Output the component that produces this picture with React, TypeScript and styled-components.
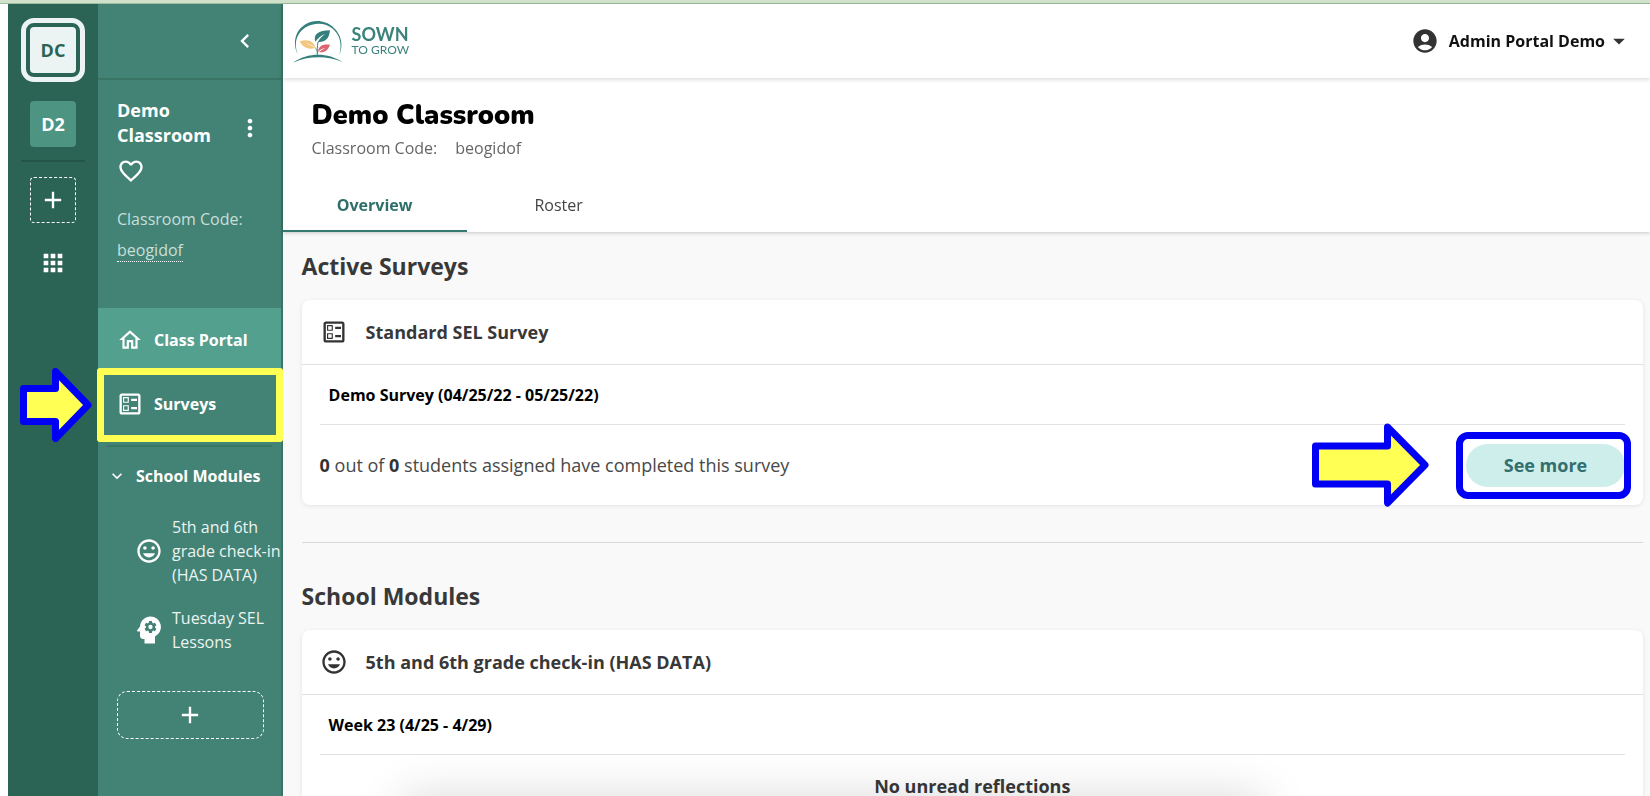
import React from "react";
import styled, { createGlobalStyle } from "styled-components";
import {
  MdAccountCircle,
  MdAdd,
  MdApps,
  MdArrowDropDown,
  MdChevronLeft,
  MdExpandMore,
  MdFavoriteBorder,
  MdMood,
  MdMoreVert,
  MdOutlineBallot,
  MdOutlineHome,
  MdPsychology,
} from "react-icons/md";

const GlobalStyle = createGlobalStyle`
  *, *::before, *::after { box-sizing: border-box; }
  body {
    margin: 0;
    background: #fff;
    color: #333;
    font-family: "Open Sans", "Noto Sans", sans-serif;
    font-size: 16px;
    line-height: 24px;
  }
  button { font: inherit; color: inherit; background: none; border: 0; padding: 0; cursor: pointer; }
  a { color: inherit; text-decoration: none; }
  h1, h2, h3, h4, p, ul { margin: 0; padding: 0; }
  ul { list-style: none; }
  svg { display: block; flex-shrink: 0; }
`;

const Page = styled.div`
  display: flex;
  height: 100vh;
  overflow: hidden;
  padding: 1px 0 0 8px;
  border-top: 3px solid #d0e2cc;
  background: linear-gradient(#a0bd9e 1px, #fff 1px);
  position: relative;
`;

const Rail = styled.nav`
  display: flex;
  flex-direction: column;
  align-items: center;
  flex: 0 0 90px;
  padding-top: 14px;
  background: #2b6354;
  color: #fff;
`;

const RailTile = styled.button<{ $active?: boolean }>`
  width: 46px;
  height: 46px;
  border-radius: 4px;
  font-size: 18px;
  font-weight: 700;
  background: ${(p) => (p.$active ? "#ebf4f2" : "#4d9482")};
  color: ${(p) => (p.$active ? "#2b6354" : "#fff")};
`;

const ActiveRing = styled.div`
  padding: 4px;
  margin-bottom: 19px;
  border: 5px solid #ebf4f2;
  border-radius: 13px;
`;

const RailDivider = styled.hr`
  width: 64px;
  height: 2px;
  margin: 13px 0 15px;
  border: 0;
  background: #245548;
`;

const DashedButton = styled.button<{ $wide?: boolean }>`
  display: flex;
  align-items: center;
  justify-content: center;
  width: ${(p) => (p.$wide ? "auto" : "46px")};
  height: ${(p) => (p.$wide ? "48px" : "46px")};
  margin: ${(p) => (p.$wide ? "18px 17px 0 19px" : "0")};
  border: 1px dashed #fff;
  border-radius: ${(p) => (p.$wide ? "10px" : "4px")};
`;

const AppsButton = styled.button`
  margin-top: 26px;
`;

const Sidebar = styled.aside`
  display: flex;
  flex-direction: column;
  flex: 0 0 184px;
  background: #438375;
  border-right: 2px solid #397565;
  color: #fff;
`;

const SidebarTop = styled.div`
  display: flex;
  align-items: center;
  justify-content: flex-end;
  height: 76px;
  padding-right: 22px;
  border-bottom: 2px solid #3a7465;
`;

const ClassInfo = styled.div`
  padding: 18px 17px 0 19px;
  height: 228px;
`;

const ClassHeading = styled.div`
  display: flex;
  align-items: center;
  justify-content: space-between;
`;

const ClassName = styled.h2`
  font-size: 18px;
  line-height: 25px;
  font-weight: 700;
`;

const KebabButton = styled.button`
  margin-top: 10px;
`;

const HeartButton = styled.button`
  display: block;
  margin: 9px 0 19px;
`;

const SideCode = styled.p`
  display: flex;
  flex-direction: column;
  align-items: flex-start;
  line-height: 31px;
  color: #c9dfda;
`;

const CodeLink = styled.a`
  margin-top: 5px;
  line-height: 20px;
  padding-bottom: 1px;
  border-bottom: 1px dotted #fff;
`;

const NavItem = styled.li`
  position: relative;
`;

const NavLink = styled.a<{ $active?: boolean }>`
  display: flex;
  align-items: center;
  height: 64px;
  font-weight: 700;
  background: ${(p) => (p.$active ? "#54a08f" : "transparent")};
`;

const NavIcon = styled.span`
  display: flex;
  justify-content: center;
  width: 28px;
  margin: 0 10px 0 18px;
`;

const HighlightFrame = styled.span`
  position: absolute;
  inset: -4px -2px -6px -1px;
  border: 7px solid #ffff54;
  border-radius: 3px;
  pointer-events: none;
`;

const NavArrow = styled.svg`
  position: absolute;
  left: -78px;
  top: -4px;
  pointer-events: none;
`;

const SideDivider = styled.hr`
  height: 2px;
  margin: 9px 9px 0;
  border: 0;
  background: #3a7465;
`;

const ModulesToggle = styled.button`
  display: flex;
  align-items: center;
  gap: 9px;
  padding: 17px 0 27px 9px;
  font-weight: 700;
`;

const ModuleLink = styled.a`
  display: flex;
  align-items: center;
  margin-bottom: 19px;
  padding-left: 33px;
  gap: 6px;
  color: #ecf4f2;
  white-space: pre;
`;

const ModuleIcon = styled.span`
  display: flex;
  justify-content: center;
  width: 35px;
  flex-shrink: 0;
  color: #fff;
`;

const Main = styled.main`
  flex: 1;
  min-width: 0;
  display: flex;
  flex-direction: column;
`;

const TopBar = styled.header`
  display: flex;
  align-items: center;
  justify-content: space-between;
  flex: 0 0 74px;
  padding: 0 17px 0 10px;
  background: #fff;
  box-shadow: 0 1px 5px rgba(0, 0, 0, 0.18);
  position: relative;
  z-index: 2;
`;

const Brand = styled.a`
  display: flex;
  align-items: center;
  gap: 9px;
  color: #3b827b;
  font-family: Lato, sans-serif;
`;

const BrandText = styled.span`
  display: flex;
  flex-direction: column;
`;

const BrandName = styled.span`
  font-size: 18px;
  line-height: 17px;
  font-weight: 700;
`;

const BrandTag = styled.span`
  font-size: 12px;
  line-height: 14px;
`;

const UserMenu = styled.button`
  display: flex;
  align-items: center;
  font-weight: 700;
  color: #111;
  gap: 10px;

  svg { color: #333; }
  svg:last-child { margin-left: -10px; }
`;

const ClassHeader = styled.section`
  flex-shrink: 0;
  position: relative;
  z-index: 1;
  background: #fff;
  box-shadow: 0 1px 4px rgba(0, 0, 0, 0.2);
`;

const Title = styled.h1`
  padding: 20px 29px 0;
  color: #000;
  font-size: 27px;
  line-height: 36px;
  font-family: Nunito, "Open Sans", sans-serif;
  font-weight: 900;
`;

const MainCode = styled.p`
  display: flex;
  gap: 18px;
  padding: 2px 29px 0;
  color: #666;
`;

const Tabs = styled.nav`
  display: flex;
  margin-top: 18px;
`;

const Tab = styled.a<{ $active?: boolean }>`
  width: 184px;
  height: 54px;
  padding-top: 15px;
  text-align: center;
  font-weight: ${(p) => (p.$active ? 700 : 400)};
  color: ${(p) => (p.$active ? "#2e6e6a" : "#444")};
  border-bottom: 2px solid ${(p) => (p.$active ? "#35786f" : "transparent")};
`;

const Content = styled.div`
  flex: 1;
  min-height: 0;
  overflow-y: auto;
  scrollbar-width: none;
  padding: 18px 7px 0 19px;
  background: #f9f9f9;
`;

const SectionTitle = styled.h2`
  font-size: 23px;
  line-height: 32px;
  font-weight: 700;
  color: #383838;
`;

const Card = styled.article`
  margin-top: 18px;
  background: #fff;
  border-radius: 8px;
  box-shadow: 0 1px 5px rgba(0, 0, 0, 0.09);
`;

const CardHeader = styled.header`
  display: flex;
  align-items: center;
  gap: 18px;
  height: 65px;
  padding-left: 18px;
  border-bottom: 1px solid #e0e0e0;
`;

const CardTitle = styled.h3`
  font-size: 18px;
  font-weight: 700;
  color: #383838;
`;

const CardBody = styled.div`
  padding: 0 18px;
`;

const PeriodTitle = styled.h4`
  height: 60px;
  padding: 18px 9px 0;
  font-size: 16px;
  font-weight: 700;
  color: #000;
  border-bottom: 1px solid #e2e2e2;
`;

const SurveyRow = styled.div`
  display: flex;
  align-items: center;
  justify-content: space-between;
  height: 80px;
  font-size: 18px;
  color: #484848;

  strong { color: #333; }
`;

const ActionWrap = styled.div`
  position: relative;
`;

const SeeMore = styled.button`
  display: block;
  width: 159px;
  height: 43px;
  border-radius: 22px;
  background: #ceeeeb;
  color: #346f70;
  font-weight: 700;
`;

const ActionFrame = styled.span`
  position: absolute;
  inset: -12px -6px;
  left: -10px;
  border: 7px solid #0000f5;
  border-radius: 12px;
  pointer-events: none;
`;

const ActionArrow = styled.svg`
  position: absolute;
  right: 196px;
  top: -21px;
  pointer-events: none;
`;

const Separator = styled.hr`
  height: 1px;
  margin: 37px 0;
  border: 0;
  background: #d8d8d8;
`;

const EmptyNote = styled.p`
  padding: 19px 0 60px;
  text-align: center;
  font-size: 18px;
  font-weight: 700;
  color: #383838;
`;

const BottomShade = styled.div`
  position: absolute;
  bottom: -42px;
  left: 25%;
  right: 24%;
  height: 30px;
  box-shadow: 0 0 48px 10px rgba(0, 0, 0, 0.16);
  pointer-events: none;
`;

const LogoMark = () => (
  <svg width="50" height="43" viewBox="0 0 150 129" fill="none" aria-hidden="true">
    <path d="M14 103C-2 70 6 34 34 15 60-3 98 0 122 23c24 22 29 54 17 82 9-34 1-60-19-78C98 7 64 6 38 22 10 40 2 70 14 103Z" fill="#35807c" />
    <path d="M0 128C44 98 102 96 150 127 102 106 46 108 0 128Z" fill="#35807c" />
    <path d="M73 106C72 92 73 79 75 66" stroke="#35807c" strokeWidth="3" />
    <path d="M67 65C60 43 76 31 111 31 108 56 99 67 74 66 80 56 88 48 97 41 84 46 75 54 67 65Z" fill="#35807c" />
    <path d="M67 84C66 66 45 54 20 64 30 83 46 90 66 84 56 77 46 73 36 70 49 71 59 76 67 84Z" fill="#f3c77f" />
    <path d="M75 95C76 79 88 71 111 74 105 92 93 99 78 96 84 91 91 87 98 83 88 85 80 89 75 95Z" fill="#db6670" />
    <path d="M73 101L75 93M72 93L67 83" stroke="#35807c" strokeWidth="2" />
  </svg>
);

export default function App() {
  return (
    <>
      <GlobalStyle />
      <Page>
        <Rail aria-label="Classrooms">
          <ActiveRing>
            <RailTile $active>DC</RailTile>
          </ActiveRing>
          <RailTile>D2</RailTile>
          <RailDivider />
          <DashedButton aria-label="Add classroom">
            <MdAdd size={28} />
          </DashedButton>
          <AppsButton aria-label="All classrooms">
            <MdApps size={28} />
          </AppsButton>
        </Rail>

        <Sidebar>
          <SidebarTop>
            <button aria-label="Collapse sidebar">
              <MdChevronLeft size={28} />
            </button>
          </SidebarTop>
          <ClassInfo>
            <ClassHeading>
              <ClassName>
                Demo
                <br />
                Classroom
              </ClassName>
              <KebabButton aria-label="Classroom options">
                <MdMoreVert size={28} />
              </KebabButton>
            </ClassHeading>
            <HeartButton aria-label="Favorite">
              <MdFavoriteBorder size={28} />
            </HeartButton>
            <SideCode>
              Classroom Code:
              <CodeLink href="#code">beogidof</CodeLink>
            </SideCode>
          </ClassInfo>

          <ul>
            <NavItem>
              <NavLink href="#portal" $active>
                <NavIcon>
                  <MdOutlineHome size={26} />
                </NavIcon>
                Class Portal
              </NavLink>
            </NavItem>
            <NavItem>
              <NavLink href="#surveys">
                <NavIcon>
                  <MdOutlineBallot size={28} />
                </NavIcon>
                Surveys
              </NavLink>
              <HighlightFrame />
              <NavArrow width="72" height="74" viewBox="0 0 72 74" aria-hidden="true">
                <path
                  d="M3.5 20.5H35.5V3.5L68 37L35.5 70.5V53.5H3.5Z"
                  fill="#ffff54"
                  stroke="#0000f5"
                  strokeWidth="7"
                  strokeLinejoin="round"
                />
              </NavArrow>
            </NavItem>
          </ul>
          <SideDivider />
          <ModulesToggle>
            <MdExpandMore size={20} />
            School Modules
          </ModulesToggle>
          <ModuleLink href="#check-in">
            <ModuleIcon>
              <MdMood size={28} />
            </ModuleIcon>
            {"5th and 6th\ngrade check-in\n(HAS DATA)"}
          </ModuleLink>
          <ModuleLink href="#lessons">
            <ModuleIcon>
              <MdPsychology size={36} />
            </ModuleIcon>
            {"Tuesday SEL\nLessons"}
          </ModuleLink>
          <DashedButton $wide aria-label="Add module">
            <MdAdd size={28} />
          </DashedButton>
        </Sidebar>

        <Main>
          <TopBar>
            <Brand href="#home">
              <LogoMark />
              <BrandText>
                <BrandName>SOWN</BrandName>
                <BrandTag>TO GROW</BrandTag>
              </BrandText>
            </Brand>
            <UserMenu>
              <MdAccountCircle size={28} />
              Admin Portal Demo
              <MdArrowDropDown size={28} />
            </UserMenu>
          </TopBar>

          <ClassHeader>
            <Title>Demo Classroom</Title>
            <MainCode>
              <span>Classroom Code:</span>
              <span>beogidof</span>
            </MainCode>
            <Tabs>
              <Tab href="#overview" $active>
                Overview
              </Tab>
              <Tab href="#roster">Roster</Tab>
            </Tabs>
          </ClassHeader>

          <Content>
            <SectionTitle>Active Surveys</SectionTitle>
            <Card>
              <CardHeader>
                <MdOutlineBallot size={28} />
                <CardTitle>Standard SEL Survey</CardTitle>
              </CardHeader>
              <CardBody>
                <PeriodTitle>Demo Survey (04/25/22 - 05/25/22)</PeriodTitle>
                <SurveyRow>
                  <p>
                    <strong>0</strong> out of <strong>0</strong> students assigned have completed this survey
                  </p>
                  <ActionWrap>
                    <SeeMore>See more</SeeMore>
                    <ActionFrame />
                    <ActionArrow width="117" height="84" viewBox="0 0 117 84" aria-hidden="true">
                      <path
                        d="M3.5 23H75.5V4L113 42L75.5 80V61H3.5Z"
                        fill="#ffff54"
                        stroke="#0000f5"
                        strokeWidth="7"
                        strokeLinejoin="round"
                      />
                    </ActionArrow>
                  </ActionWrap>
                </SurveyRow>
              </CardBody>
            </Card>
            <Separator />
            <SectionTitle>School Modules</SectionTitle>
            <Card>
              <CardHeader>
                <MdMood size={28} />
                <CardTitle>5th and 6th grade check-in (HAS DATA)</CardTitle>
              </CardHeader>
              <CardBody>
                <PeriodTitle>Week 23 (4/25 - 4/29)</PeriodTitle>
                <EmptyNote>No unread reflections</EmptyNote>
              </CardBody>
            </Card>
          </Content>
        </Main>
        <BottomShade />
      </Page>
    </>
  );
}
